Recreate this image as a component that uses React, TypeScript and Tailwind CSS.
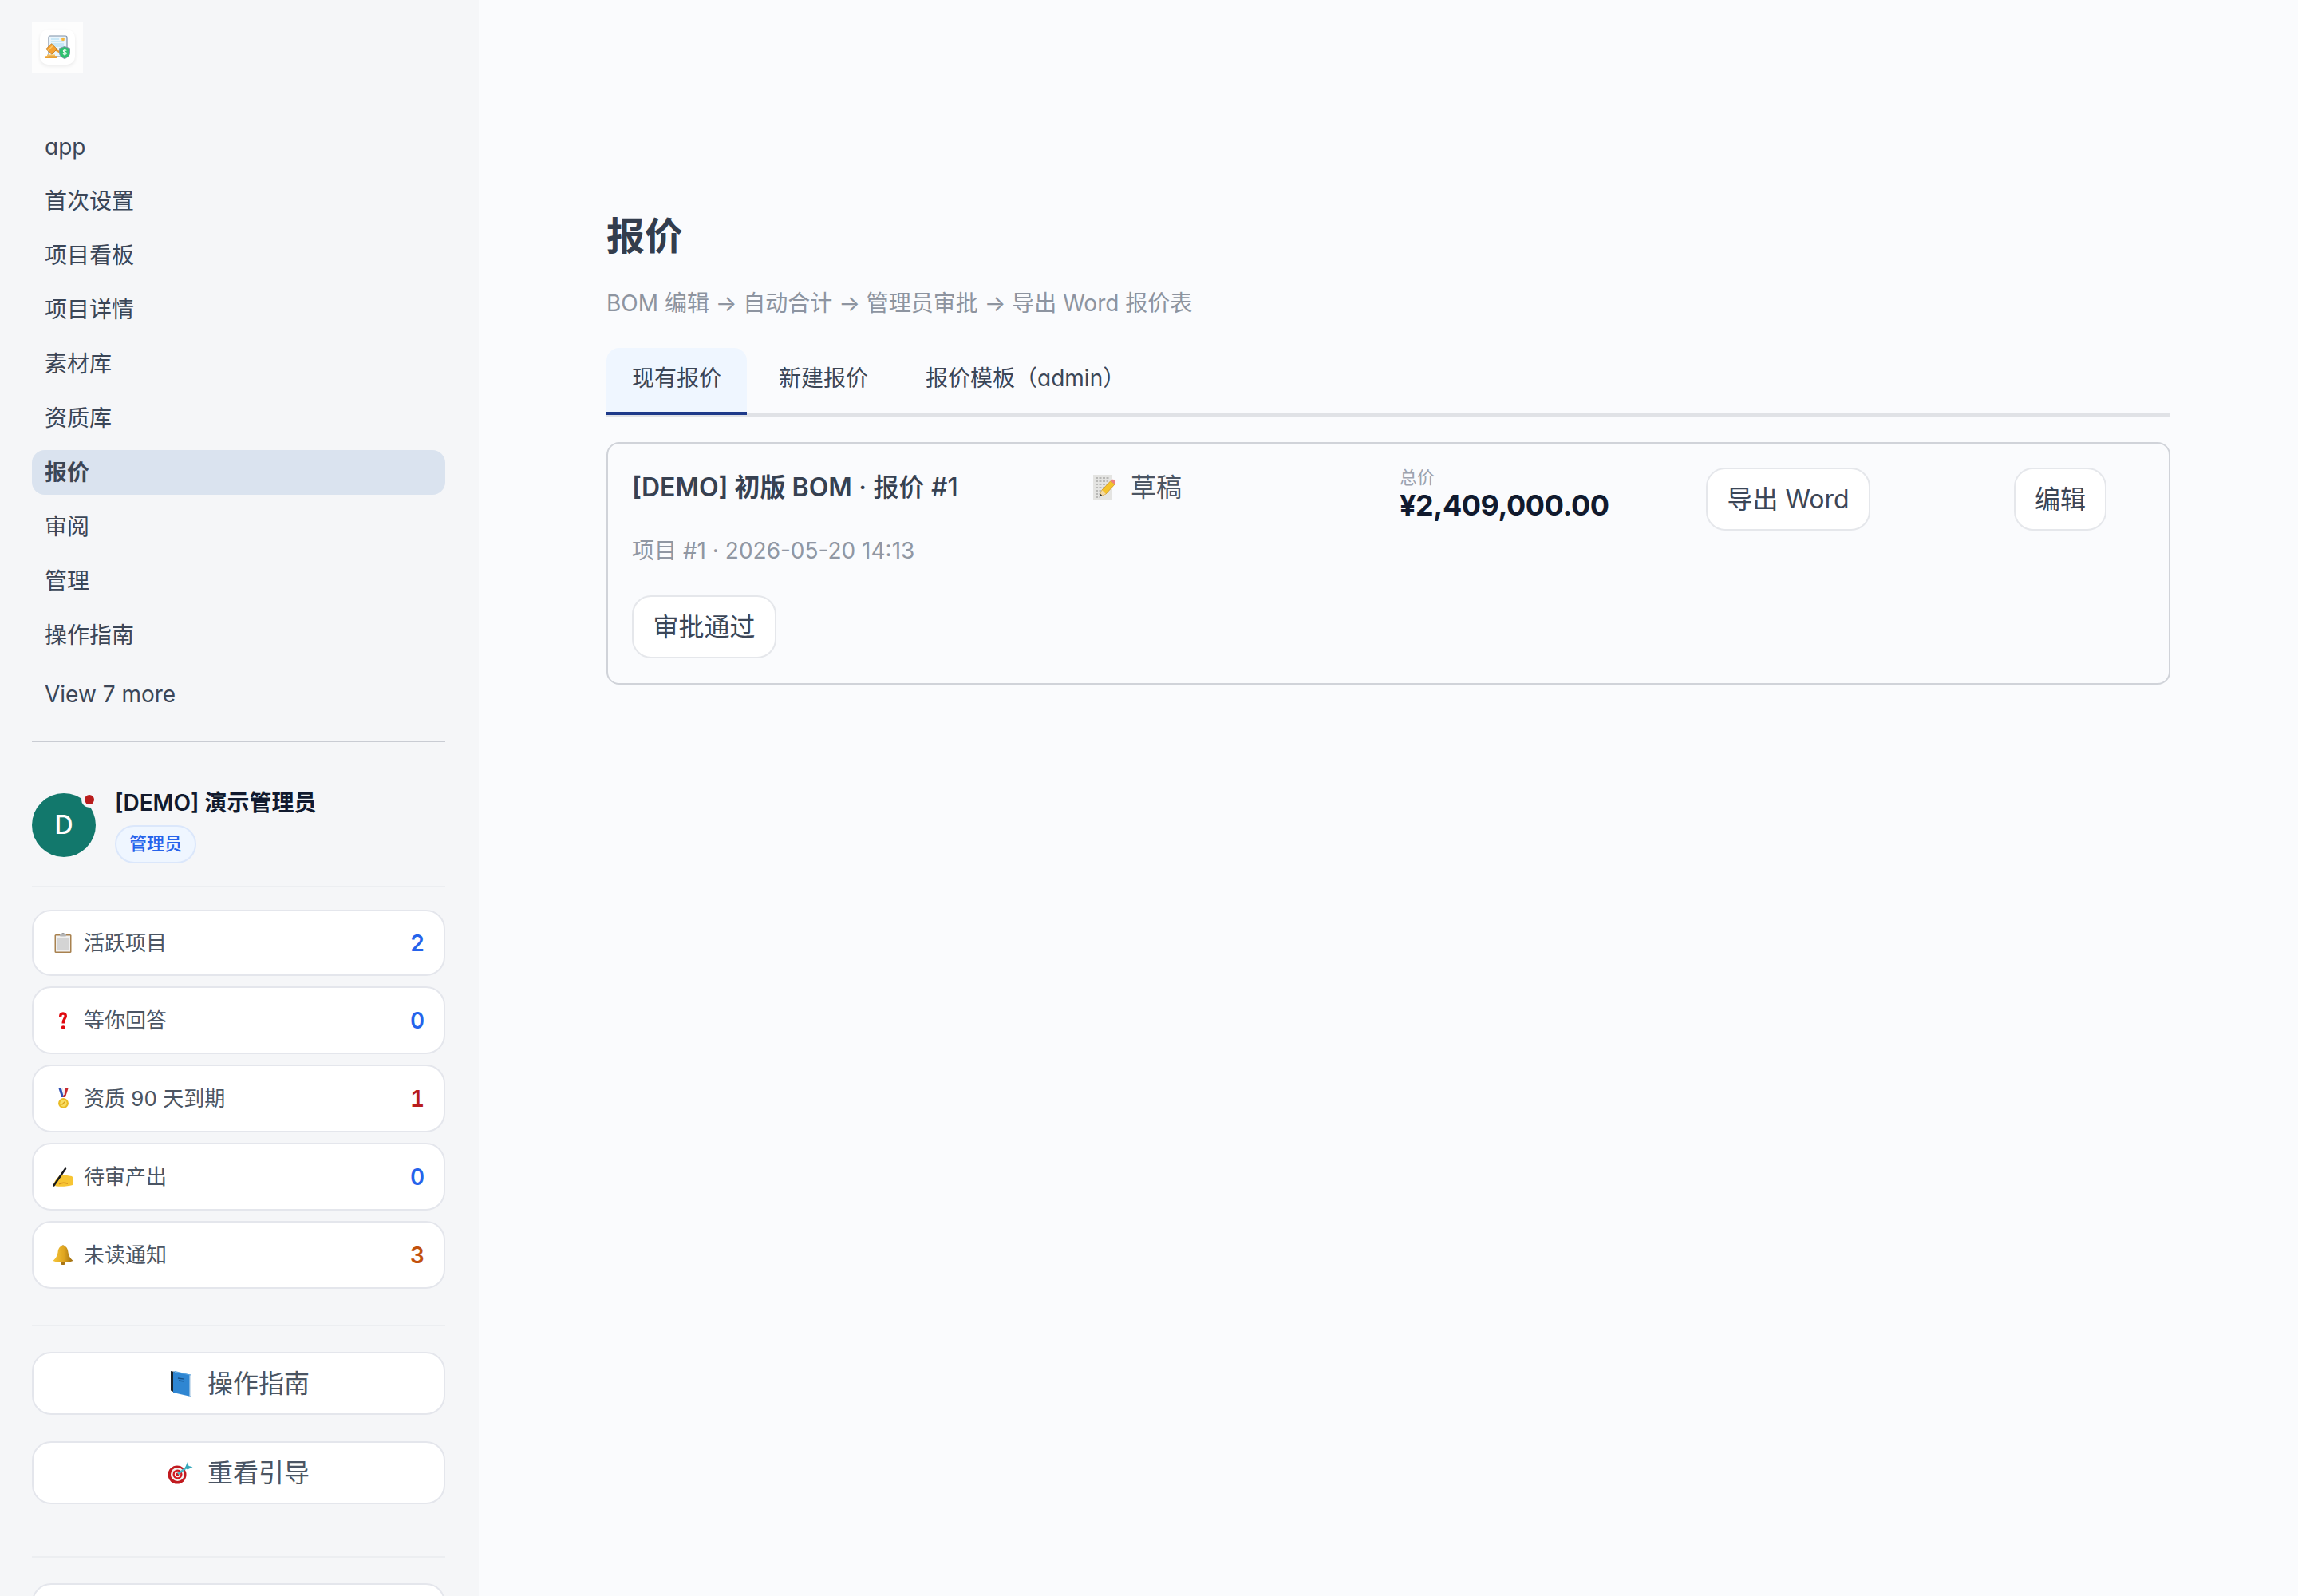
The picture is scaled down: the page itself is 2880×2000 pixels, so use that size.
import React from "react";

const font = { fontFamily: "Inter, 'Noto Sans CJK SC', sans-serif", fontFeatureSettings: "'cv11'" };

function Logo() {
  return (
    <svg viewBox="50 37 44 44" className="w-[44px] h-[44px]">
      <rect x="61" y="45" width="23" height="26" rx="2" fill="#eaf5fc" stroke="#7d8fa6" strokeWidth="1.2" />
      <path d="M64 49h10M64 52h16M64 55h16M68 58h12" stroke="#bfe3f5" strokeWidth="1.4" />
      <path d="M79 46.5l1 1.6 1.7.4-1.2 1.3.2 1.8-1.7-.8-1.7.8.2-1.8-1.2-1.3 1.7-.4z" fill="#f8b63a" />
      <path d="M67 61l9 5" stroke="#e89a2d" strokeWidth="2.4" />
      <path d="M57.800 61.500l6.700-6.700 7 6.800-6.700 6.600z" fill="#f5a132" stroke="#b9761c" strokeWidth=".8" />
      <path d="M60 63.500l6-6" stroke="#fbc76a" strokeWidth="1.600" />
      <rect x="59" y="68.500" width="10" height="1.800" fill="#f7bf5a" />
      <rect x="57" y="70.200" width="15" height="2.800" rx=".6" fill="#eba02f" />
      <path d="M81 58.500l6.500 2.200v5.500c0 3.500-2.800 5.900-6.500 7.300-3.700-1.400-6.500-3.800-6.500-7.300v-5.500z" fill="#2fc06f" stroke="#7d8fa6" strokeWidth=".9" />
      <path d="M83.200 63.600c-.4-1-3.600-1.300-3.900.3-.2 1.900 4.300 1 4 3.100-.2 1.600-3.700 1.400-4.300.2M81 61.400v8" stroke="#ffffff" strokeWidth="1.100" fill="none" />
    </svg>
  );
}

function ClipboardIcon() {
  return (
    <svg viewBox="0 0 22 25" className="w-[22px] h-[25px]">
      <rect x="0.5" y="2" width="21" height="23" rx="1.5" fill="#a8814f" />
      <rect x="2" y="3.5" width="18" height="20" fill="#efefef" />
      <rect x="4" y="7" width="14" height="14" fill="#d4d4d4" />
      <rect x="7" y="1" width="8" height="3.5" rx="1" fill="#b5b5b5" />
      <rect x="9.5" y="0" width="3" height="2" fill="#9b9b9b" />
    </svg>
  );
}

function QuestionIcon() {
  return (
    <svg viewBox="0 0 10 22" className="w-[10px] h-[22px]">
      <path d="M1.8 5.8C1.6 3.4 3 1.900 5 1.900s3.400 1.500 3.200 3.600C8 8.100 5.200 9 5.200 14.600" fill="none" stroke="#e0090f" strokeWidth="3.500" />
      <circle cx="5.2" cy="19.6" r="2.400" fill="#e0090f" />
    </svg>
  );
}

function MedalIcon() {
  return (
    <svg viewBox="0 0 13 26" className="w-[13px] h-[26px]">
      <path d="M0.5 0h3.5l3 11h-3z" fill="#2f4fb5" />
      <path d="M12.5 0H9L6 11h3z" fill="#c6282e" />
      <path d="M4 0h1.4l1.6 8 1.4-8" fill="none" stroke="#e8e8ee" strokeWidth="1" />
      <circle cx="6.5" cy="18.5" r="6.4" fill="#e9bb24" />
      <circle cx="6.5" cy="18.5" r="4.2" fill="#f8de63" />
      <path d="M4.5 20.5l4-4" stroke="#d99f16" strokeWidth="1.2" />
    </svg>
  );
}

function HandIcon() {
  return (
    <svg viewBox="0 0 26 24" className="w-[26px] h-[24px]">
      <path d="M1.500 20C3.500 15 8 10 12 9l12 2c2 .8 2.500 9 1 11-5 1.800-15 2-20 1.500-2-.2-3.800-1.500-3.500-3.500z" fill="#f7c533" />
      <path d="M8 21c3-2 7-2 11-.7" stroke="#d8901f" strokeWidth="1.500" fill="none" />
      <path d="M1.500 22.500L16 1.500" stroke="#17181c" strokeWidth="2.400" strokeLinecap="round" />
    </svg>
  );
}

function BellIcon() {
  return (
    <svg viewBox="0 0 26 25" className="w-[26px] h-[25px]">
      <defs>
        <linearGradient id="bellG" x1="0" x2="1" y1="0" y2="0">
          <stop offset="0" stopColor="#f5c53a" />
          <stop offset="0.55" stopColor="#dfa51f" />
          <stop offset="1" stopColor="#9a6a10" />
        </linearGradient>
      </defs>
      <circle cx="13" cy="2" r="1.800" fill="#b5841a" />
      <path d="M13 1.500c4.500 0 6 3.500 6.500 8 .4 4.500 3 7.500 6 10.500-3.500 1.500-8 2-12.500 2s-9-.5-12.500-2c3-3 5.600-6 6-10.500.5-4.500 2-8 6.500-8z" fill="url(#bellG)" />
      <ellipse cx="13" cy="23" rx="3" ry="2" fill="#a87414" />
    </svg>
  );
}

function BookIcon() {
  return (
    <svg viewBox="0 0 26 32" className="w-[26px] h-[32px]">
      <path d="M0 0l5 1v26l-5-2.500z" fill="#1c2329" />
      <path d="M3 1l22 3.500V32L3 27z" fill="#2f86d2" />
      <path d="M23.500 4.300L26 5v26l-2.500 1z" fill="#cfe0ee" />
      <path d="M9 9l8 1.200M10 12l6 .9" stroke="#174f85" strokeWidth="1.300" />
      <path d="M3 1l2.500-1L26 5l-2 .5z" fill="#5aa6e2" />
    </svg>
  );
}

function TargetIcon() {
  return (
    <svg viewBox="0 0 32 28" className="w-[32px] h-[28px]">
      <circle cx="12" cy="16" r="11.500" fill="#c11a1f" />
      <circle cx="12.500" cy="15.500" r="8.500" fill="#f3f0ee" />
      <circle cx="12.500" cy="15.500" r="6" fill="#d0181f" />
      <circle cx="12.500" cy="15.500" r="3.700" fill="#f7f4f2" />
      <circle cx="12.500" cy="15.500" r="2" fill="#d0181f" />
      <path d="M13 15L25 6" stroke="#48b7c5" strokeWidth="2.600" />
      <path d="M22 7l3-7 1.500 5 5 1.300-6.500 3.200z" fill="#35a8bb" />
    </svg>
  );
}

function MemoIcon() {
  return (
    <svg viewBox="0 0 28 32" className="w-[28px] h-[32px]">
      <rect x="0" y="0" width="24" height="32" fill="#e4e4e2" />
      <path d="M3 4h18M3 8h16M3 12h18M3 16h13M3 20h9M3 24h6M3 28h5" stroke="#8c8c8a" strokeWidth="1" strokeDasharray="3 1.500" />
      <path d="M8 27l3-8L22 7.500l5 4.500L16 24z" fill="#f5c32c" stroke="#c88e1a" strokeWidth=".7" />
      <path d="M8 27l3-8 5 5z" fill="#f1d9a8" />
      <path d="M8 27l1-3.200 2.200 2z" fill="#333333" />
      <path d="M22 7.500c1.500-2 3-2.400 4.500-1s1.500 3.500.5 5.500z" fill="#ee7f7f" />
    </svg>
  );
}

const navItems = ["app", "首次设置", "项目看板", "项目详情", "素材库", "资质库", "报价", "审阅", "管理", "操作指南"];

const stats: { icon: React.ReactNode; label: string; value: string; color: string; height: string }[] = [
  { icon: <ClipboardIcon />, label: "活跃项目", value: "2", color: "text-[#2563eb]", height: "h-[83px]" },
  { icon: <QuestionIcon />, label: "等你回答", value: "0", color: "text-[#2563eb]", height: "h-[85px]" },
  { icon: <MedalIcon />, label: "资质 90 天到期", value: "1", color: "text-[#b91c1c]", height: "h-[85px]" },
  { icon: <HandIcon />, label: "待审产出", value: "0", color: "text-[#2563eb]", height: "h-[85px]" },
  { icon: <BellIcon />, label: "未读通知", value: "3", color: "text-[#c2510c]", height: "h-[85px]" },
];

function Sidebar() {
  return (
    <aside className="w-[600px] h-full shrink-0 bg-[#f5f6f8] pt-[28px] pl-[40px] pr-[42px] flex flex-col overflow-hidden">
      <div className="w-[64px] h-[64px] bg-[#fdfdfd] flex items-start justify-center pt-[9px] shrink-0">
        <div className="w-[44px] h-[44px] bg-white rounded-[10px] shadow-[0_2px_4px_rgba(0,0,0,0.08)] flex items-center justify-center">
          <Logo />
        </div>
      </div>
      <nav className="mt-[64px] flex flex-col gap-[12px] shrink-0">
        {navItems.map((item) => (
          <div
            key={item}
            className={`h-[56px] rounded-[16px] px-[16px] flex items-center text-[28px] text-[#3b4657] ${
              item === "报价" ? "bg-[#dae3ef] font-semibold" : ""
            }`}
          >
            {item}
          </div>
        ))}
      </nav>
      <div className="mt-[18px] h-[56px] px-[16px] flex items-center text-[28px] text-[#3b4657] shrink-0">View 7 more</div>
      <div className="mt-[30px] h-[2px] bg-[#c9ccd3] shrink-0" />
      <div className="mt-[58px] flex items-center gap-[24px] shrink-0">
        <div className="relative w-[80px] h-[80px] mb-[2px] rounded-full bg-[#12786c] flex items-center justify-center text-white text-[32px] font-medium">
          D
          <span className="absolute top-[-2px] right-[-2px] w-[20px] h-[20px] rounded-full bg-[#f5f6f8] flex items-center justify-center">
            <span className="block w-[12px] h-[12px] rounded-full bg-[#b91c1c]" />
          </span>
        </div>
        <div className="flex flex-col items-start">
          <div className="h-[36px] leading-[36px] text-[28px] font-semibold text-[#111a2e]">[DEMO] 演示管理员</div>
          <div className="mt-[10px] h-[48px] w-[102px] pb-[2px] rounded-full bg-[#eff6ff] border-2 border-[#dbe7fb] flex items-center justify-center text-[22px] font-medium text-[#2563eb]">
            管理员
          </div>
        </div>
      </div>
      <div className="mt-[28px] h-[2px] bg-[#eceef1] shrink-0" />
      <div className="mt-[28px] flex flex-col gap-[13px] shrink-0">
        {stats.map((s) => (
          <div
            key={s.label}
            className={`${s.height} rounded-[24px] bg-white border-2 border-[#e4e6ec] pl-[24px] pr-[24px] flex items-center`}
          >
            <span className="w-[26px] flex items-center justify-center shrink-0">{s.icon}</span>
            <span className="ml-[13px] text-[26px] text-[#4b5563]">{s.label}</span>
            <span className={`ml-auto text-[28px] font-semibold tabular-nums ${s.color}`}>{s.value}</span>
          </div>
        ))}
      </div>
      <div className="mt-[45px] h-[2px] bg-[#eceef1] shrink-0" />
      <button className="mt-[32px] h-[79px] shrink-0 pl-[4px] rounded-[24px] bg-white border-2 border-[#e4e6ec] flex items-center justify-center gap-[20px] text-[32px] text-[#4b5563]">
        <BookIcon />
        操作指南
      </button>
      <button className="mt-[33px] h-[79px] shrink-0 rounded-[24px] bg-white border-2 border-[#e4e6ec] flex items-center justify-center gap-[18px] text-[32px] text-[#4b5563]">
        <TargetIcon />
        重看引导
      </button>
      <div className="mt-[65px] h-[2px] bg-[#eceef1] shrink-0" />
      <div className="mt-[32px] h-[80px] shrink-0 rounded-[24px] bg-white border-2 border-[#e4e6ec]" />
    </aside>
  );
}

const btn =
  "h-[79px] rounded-[24px] bg-white border-2 border-[#e5e7eb] flex items-center justify-center text-[32px] text-[#3b4657]";

function Main() {
  return (
    <main className="flex-1 bg-[#fafbfd] px-[160px] pt-[266px]">
      <h1 className="h-[60px] leading-[60px] text-[48px] font-semibold text-[#333d4d]">报价</h1>
      <p className="mt-[36px] h-[36px] leading-[36px] text-[28px] text-[#8d94a0]">
        BOM 编辑 → 自动合计 → 管理员审批 → 导出 Word 报价表
      </p>
      <div className="mt-[38px] flex gap-[8px] border-b-[4px] border-[#e0e2e6] h-[86px]">
        <div className="h-[84px] px-[32px] pb-[4px] bg-[#eff6ff] rounded-t-[16px] border-b-[4px] border-[#1e3a8a] flex items-center text-[28px] text-[#3b4657]">
          现有报价
        </div>
        <div className="h-[84px] px-[32px] pb-[8px] flex items-center text-[28px] text-[#3b4657]">新建报价</div>
        <div className="h-[84px] px-[32px] pb-[8px] flex items-center text-[28px] text-[#3b4657]">报价模板（admin）</div>
      </div>
      <section className="mt-[32px] h-[304px] rounded-[16px] border-2 border-[#d0d3d9] pl-[30px] pr-[32px] pt-[30px]">
        <div className="grid grid-cols-[578px_384px_384px_386px_1fr]">
          <div className="h-[50px] leading-[50px] text-[32px] text-[#374151]">
            <span className="font-semibold">[DEMO] 初版 BOM</span>
            <span className="font-medium"> · 报价 #1</span>
          </div>
          <div className="h-[50px] flex items-center gap-[19px] text-[32px] text-[#4b5563]">
            <MemoIcon />
            草稿
          </div>
          <div className="flex flex-col">
            <span className="h-[26px] leading-[24px] text-[22px] text-[#9ca3af]">总价</span>
            <span className="h-[42px] leading-[42px] text-[36px] font-bold tracking-[-0.45px] text-[#111a2e]">¥2,409,000.00</span>
          </div>
          <div>
            <button className={`${btn} w-[206px]`}>导出 Word</button>
          </div>
          <div>
            <button className={`${btn} w-[116px]`}>编辑</button>
          </div>
        </div>
        <div className="mt-[7px] h-[36px] leading-[36px] text-[28px] text-[#9097a3]">
          项目 #1 · 2026-05-20 14:13
        </div>
        <button className={`${btn} w-[181px] mt-[38px]`}>审批通过</button>
      </section>
    </main>
  );
}

export default function App() {
  return (
    <div className="w-[2880px] h-[2000px] overflow-hidden flex" style={font}>
      <Sidebar />
      <Main />
    </div>
  );
}
